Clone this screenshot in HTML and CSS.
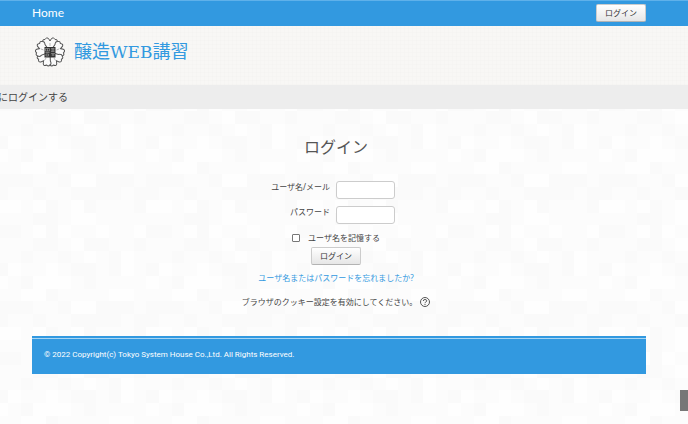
FILE: index.html
```html
<!DOCTYPE html>
<html lang="ja">
<head>
  <meta charset="UTF-8">
  <meta name="viewport" content="width=device-width, initial-scale=1.0">
  <title>醸造WEB講習: ログイン</title>
  <link rel="stylesheet" href="styles.css">
</head>
<body>
  <nav class="navbar">
    <a class="brand" href="#">Home</a>
    <button type="button" class="btn">ログイン</button>
  </nav>

  <header class="page-header">
    <svg class="logo" viewBox="0 0 60 60" aria-hidden="true">
      <defs>
        <path id="petal" d="M30 30 L19 16 Q13 13 15 9 Q15 4 20 5 Q23 -1 27 3 L30 8 L33 3 Q37 -1 40 5 Q45 4 45 9 Q47 13 41 16 Z"/>
      </defs>
      <g class="petals">
        <use href="#petal"/>
        <use href="#petal" transform="rotate(72 30 30)"/>
        <use href="#petal" transform="rotate(144 30 30)"/>
        <use href="#petal" transform="rotate(216 30 30)"/>
        <use href="#petal" transform="rotate(288 30 30)"/>
      </g>
      <path class="stamens" d="M30 18V12M43 26l5-2M38 42l3 5M22 42l-3 5M17 26l-5-2"/>
      <rect class="seal" x="19" y="20" width="22" height="21"/>
      <path class="seal-lines" d="M21 23h8v5h-8zM25 23v5M21 31h8M22 34h5v4h-5zM32 23h7M32 26h7M32 29h7M36 23v6M32 33h8M33 36h6M36 33v5"/>
    </svg>
    <h1 class="site-title">醸造<span class="latin">WEB</span>講習</h1>
  </header>

  <div class="breadcrumb">にログインする</div>

  <main class="content">
    <h2 class="login-title">ログイン</h2>
    <form class="login-form">
      <div class="field">
        <label for="username">ユーザ名/メール</label>
        <input type="text" id="username">
      </div>
      <div class="field">
        <label for="password">パスワード</label>
        <input type="password" id="password">
      </div>
      <div class="remember">
        <input type="checkbox" id="remember">
        <label for="remember">ユーザ名を記憶する</label>
      </div>
      <button type="submit" class="btn">ログイン</button>
    </form>
    <a class="forgot" href="#">ユーザ名またはパスワードを忘れましたか?</a>
    <div class="cookies">
      <span>ブラウザのクッキー設定を有効にしてください。</span>
      <a class="help" href="#" aria-label="ヘルプ">
        <svg viewBox="0 0 20 20">
          <circle cx="10" cy="10" r="9"/>
          <path d="M6.5 8 Q6.5 5 10 5 Q13.5 5 13.5 7.7 Q13.5 9.2 11.5 10 Q10 10.7 10 12.4M10 14v2"/>
        </svg>
      </a>
    </div>
  </main>

  <footer class="footer">© 2022 Copyright(c) Tokyo System House Co.,Ltd. All Rights Reserved.</footer>
  <button type="button" class="side-tab" aria-label="上へ"></button>
</body>
</html>
```

FILE: styles.css
```css
* { box-sizing: border-box; }
body {
  margin: 0;
  min-height: 100vh;
  font-family: "Noto Sans", "Noto Sans CJK JP", sans-serif;
  font-size: 8px;
  line-height: 12px;
  color: #444;
  background-color: #fcfcfc;
  /* pale mosaic tile, 12 x 10 cells */
  background-image: url("data:image/svg+xml,%3Csvg xmlns='http://www.w3.org/2000/svg' width='151' height='127' viewBox='0 0 12 10' preserveAspectRatio='none' shape-rendering='crispEdges'%3E%3Cpath fill='%23fefefe' d='M2 0h3v1h-3zM11 0h1v1h-1zM1 1h2v1h-2zM8 1h2v1h-2zM5 2h2v1h-2zM0 4h1v1h-1zM2 4h1v1h-1zM5 4h1v1h-1zM11 4h1v1h-1zM5 5h2v1h-2zM2 6h1v1h-1zM4 6h1v1h-1zM7 6h1v1h-1zM10 6h1v1h-1zM5 7h1v1h-1zM6 8h1v1h-1zM9 8h1v2h-1zM0 9h1v1h-1zM3 9h1v1h-1z'/%3E%3Cpath fill='%23fafafa' d='M1 0h1v1h-1zM6 0h1v1h-1zM3 1h1v1h-1zM0 2h2v1h-2zM4 2h1v1h-1zM7 2h3v1h-3zM11 2h1v2h-1zM2 3h1v1h-1zM5 3h4v1h-4zM10 3h1v2h-1zM3 4h1v1h-1zM6 4h1v1h-1zM2 5h2v1h-2zM0 6h1v1h-1zM3 6h1v1h-1zM11 6h1v1h-1zM2 7h2v1h-2zM6 7h2v1h-2zM10 7h1v1h-1zM1 8h1v1h-1zM4 8h1v1h-1zM8 8h1v2h-1zM5 9h2v1h-2zM11 9h1v1h-1z'/%3E%3C/svg%3E");
  background-size: 151px 127px;
  background-position: 8px 22px;
}
a {
  color: #3299e0;
  text-decoration: none;
}
.navbar {
  display: flex;
  align-items: center;
  justify-content: space-between;
  height: 26px;
  padding: 0 42px 0 32px;
  background: #3299e0;
  border-top: 1px solid #5fb1ea;
  border-bottom: 1px solid #3299e0;
}
.brand {
  font-family: Lato, sans-serif;
  font-size: 12px;
  color: #fff;
}
.btn {
  height: 18px;
  padding: 0 8px;
  font: inherit;
  color: #333;
  background: linear-gradient(#fff, #e6e6e6);
  border: 1px solid #ccc;
  border-bottom-color: #b3b3b3;
  border-radius: 2px;
}
.page-header {
  display: flex;
  align-items: center;
  gap: 9px;
  height: 59px;
  padding: 0 42px 8px 35px;
  background-color: #f8f7f5;
  background-image:
    repeating-linear-gradient(0deg, #f3f2f066 0 1px, transparent 1px 4px),
    repeating-linear-gradient(90deg, #f3f2f066 0 1px, transparent 1px 4px);
}
.logo {
  width: 30px;
  height: 30px;
}
.petals {
  fill: #fafafa;
  stroke: #555;
  stroke-width: 2;
}
.stamens {
  fill: none;
  stroke: #777;
  stroke-width: 1;
}
.seal { fill: #333; }
.seal-lines {
  fill: none;
  stroke: #bbb;
  stroke-width: 1;
}
.site-title {
  margin: 0;
  font-size: 18px;
  font-weight: normal;
  line-height: 26px;
  color: #3299e0;
}
.latin {
  font-family: "DejaVu Serif", serif;
  font-size: 17px;
}
.breadcrumb {
  height: 24px;
  font-size: 10px;
  line-height: 24px;
  text-indent: -2px;
  background: #ededed;
}
.content {
  display: flex;
  flex-direction: column;
  align-items: center;
  margin: 0 48px 0 32px;
  padding: 24px 0 28px;
}
.login-title {
  margin: 0 0 20px;
  font-size: 16px;
  font-weight: normal;
  line-height: 28px;
  color: #555;
}
.login-form {
  display: flex;
  flex-direction: column;
  align-items: center;
}
.field {
  display: grid;
  grid-template-columns: 64px 70px;
  gap: 6px;
  margin-bottom: 7px;
}
.field label { text-align: right; }
.field input {
  width: 59px;
  height: 18px;
  padding: 2px 4px;
  font: inherit;
  background: #fff;
  border: 1px solid #ccc;
  border-radius: 3px;
}
.remember {
  display: flex;
  align-items: center;
  gap: 8px;
  margin: 1px 0 3px;
}
.remember input {
  appearance: none;
  width: 8px;
  height: 8px;
  margin: 0;
  background: #fff;
  border: 1px solid #777;
  border-radius: 1px;
}
.remember input:checked { background: #3299e0; }
.forgot { margin: 7px 0 12px; }
.cookies {
  display: flex;
  align-items: center;
  gap: 3px;
}
.help {
  display: flex;
}
.help svg {
  width: 10px;
  height: 10px;
  fill: none;
  stroke: #555;
  stroke-width: 2;
}
.footer {
  height: 38px;
  margin: 0 42px 0 32px;
  padding: 13px 12px;
  font-family: Roboto, sans-serif;
  color: #fff;
  background: linear-gradient(#3299e0 2px, #a9d6f4 2px 3px, #3299e0 3px);
}
.side-tab {
  position: fixed;
  right: 0;
  bottom: 13px;
  width: 8px;
  height: 21px;
  padding: 0;
  background: #777;
  border: 0;
}
```
